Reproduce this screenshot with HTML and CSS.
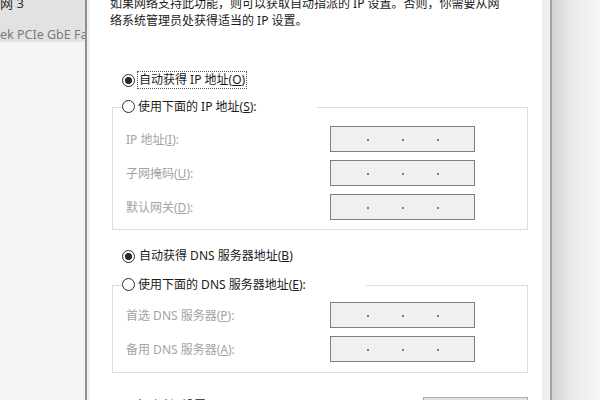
FILE: index.html
```html
<!DOCTYPE html>
<html lang="zh-CN">
<head>
<meta charset="utf-8">
<title>Internet 协议版本 4 (TCP/IPv4) 属性</title>
<link rel="stylesheet" href="styles.css">
</head>
<body>
<div class="screen">
  <aside class="sidebar">
    <div class="item selected">
      <div class="item-name">网 3</div>
      <div class="item-desc">ek PCIe GbE Family Controller</div>
    </div>
  </aside>
  <div class="edge-left"></div>
  <main class="dialog">
    <p class="intro">如果网络支持此功能，则可以获取自动指派的 IP 设置。否则，你需要从网<br>络系统管理员处获得适当的 IP 设置。</p>

    <div class="radio-row first"><span class="radio checked"></span><span class="focus">自动获得 IP 地址(<u>O</u>)</span></div>
    <fieldset class="group group-ip">
      <legend><span class="radio"></span>使用下面的 IP 地址(<u>S</u>):</legend>
      <div class="row"><span class="field-label">IP 地址(<u>I</u>):</span><span class="ipbox"><i></i><i></i><i></i></span></div>
      <div class="row"><span class="field-label">子网掩码(<u>U</u>):</span><span class="ipbox"><i></i><i></i><i></i></span></div>
      <div class="row"><span class="field-label">默认网关(<u>D</u>):</span><span class="ipbox"><i></i><i></i><i></i></span></div>
    </fieldset>

    <div class="radio-row dns"><span class="radio checked"></span><span class="plain">自动获得 DNS 服务器地址(<u>B</u>)</span></div>
    <fieldset class="group group-dns">
      <legend><span class="radio"></span>使用下面的 DNS 服务器地址(<u>E</u>):</legend>
      <div class="row"><span class="field-label">首选 DNS 服务器(<u>P</u>):</span><span class="ipbox"><i></i><i></i><i></i></span></div>
      <div class="row"><span class="field-label">备用 DNS 服务器(<u>A</u>):</span><span class="ipbox"><i></i><i></i><i></i></span></div>
    </fieldset>

    <div class="footer">
      <span class="check-label">退出时验证设置(<u>L</u>)</span>
      <span class="button">高级(<u>V</u>)...</span>
    </div>
  </main>
  <div class="edge-right"></div>
  <div class="shadow"></div>
</div>
</body>
</html>
```
FILE: styles.css
```css
html, body {
  margin: 0;
  padding: 0;
  background: #ffffff;
}
body {
  font-family: "Noto Sans", "Noto Sans CJK SC", sans-serif;
  font-size: 12px;
  color: #1b1b1b;
}
.screen {
  display: flex;
  width: 600px;
  height: 400px;
  overflow: hidden;
}
u {
  text-decoration: underline;
  text-underline-offset: 1px;
}

/* left list */
.sidebar {
  width: 85px;
  flex: none;
  background: #f4f4f4;
  overflow: hidden;
}
.item.selected {
  background: #e2e2e2;
  height: 48px;
  margin-top: -6px;
  padding-top: 0;
}
.item-name {
  font-size: 13px;
  line-height: 18px;
  color: #2c2c2c;
  white-space: nowrap;
}
.item-desc {
  font-size: 12.5px;
  line-height: 18px;
  margin-top: 14px;
  color: #7b7b7b;
  white-space: nowrap;
}
.edge-left {
  width: 3px;
  flex: none;
  border-left: 2px solid #8e8e8e;
  background: #f0f0f0;
}

/* dialog */
.dialog {
  width: 452px;
  flex: none;
  background: #ffffff;
  overflow: hidden;
}
.intro {
  margin: -5px 0 0 20px;
  font-size: 12px;
  line-height: 17px;
  white-space: nowrap;
  color: #1b1b1b;
}
.radio-row {
  display: flex;
  align-items: center;
  height: 18px;
  margin-left: 32px;
}
.radio-row.first { margin-top: 42px; }
.radio-row.dns { margin-top: 17px; }
.radio {
  display: inline-block;
  box-sizing: border-box;
  width: 13px;
  height: 13px;
  border: 1px solid #2a2a2a;
  border-radius: 50%;
  background: #ffffff;
  margin-right: 2px;
  vertical-align: -2px;
  flex: none;
}
.radio.checked {
  background: radial-gradient(circle, #2a2a2a 0 3.3px, #ffffff 3.9px);
}
.focus {
  line-height: 16px;
  padding: 0 1px;
  border: 1px dotted #555555;
}
.plain {
  line-height: 18px;
  padding-left: 2px;
}

.group {
  box-sizing: border-box;
  width: 416px;
  margin: 9px 0 0 22px;
  border: 1px solid #dddddd;
  padding: 10px 0 9px 13px;
  min-width: 0;
}
.group-dns {
  margin-top: 11px;
  padding-top: 8px;
  padding-bottom: 10px;
}
.group legend {
  margin-left: -4px;
  padding: 0 60px 0 0;
  line-height: 18px;
  white-space: nowrap;
}
.group legend .radio { margin-right: 3px; }
.row {
  display: grid;
  grid-template-columns: 204px 145px;
  align-items: center;
  height: 26px;
}
.row + .row { margin-top: 8px; }
.field-label {
  color: #a3a3a3;
  white-space: nowrap;
}
.ipbox {
  box-sizing: border-box;
  height: 26px;
  width: 145px;
  border: 1px solid #7f7f7f;
  background: #f0f0f0;
  display: flex;
  align-items: center;
  justify-content: center;
  gap: 33px;
  padding-top: 2px;
}
.ipbox i {
  display: block;
  width: 2px;
  height: 2px;
  background: #7a7a7a;
}

.footer {
  display: flex;
  justify-content: space-between;
  align-items: flex-start;
  margin: 20px 14px 0 32px;
}
.check-label {
  line-height: 17px;
  margin-top: 4px;
}
.button {
  box-sizing: border-box;
  width: 105px;
  height: 23px;
  margin-top: 4px;
  border: 1px solid #adadad;
  background: #e1e1e1;
  text-align: center;
  line-height: 21px;
}

.edge-right {
  width: 8px;
  flex: none;
  background: #eeeeee;
  border-right: 2px solid #a3a3a3;
}
.shadow {
  flex: 1;
  background: linear-gradient(to right, #d4d4d4, #e9e9e9 40%, #f6f6f6);
}
```
